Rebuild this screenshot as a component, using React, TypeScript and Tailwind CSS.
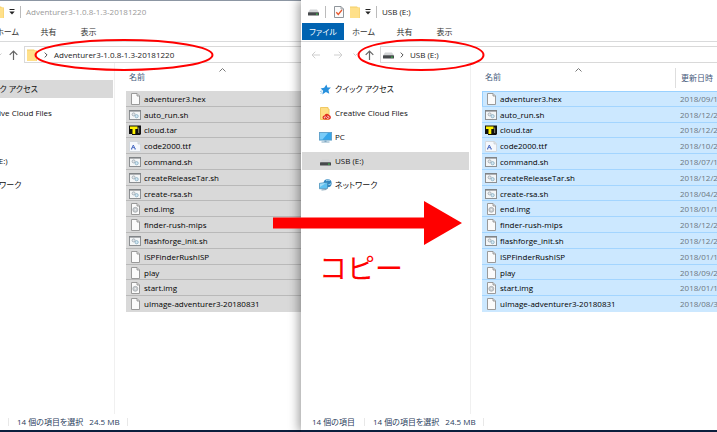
import type { ReactNode } from "react";

type Kind = "doc" | "script" | "tar" | "font" | "image";
type FileRow = { name: string; kind: Kind; date: string };

const FILES: FileRow[] = [
  { name: "adventurer3.hex", kind: "doc", date: "2018/09/1" },
  { name: "auto_run.sh", kind: "script", date: "2018/12/2" },
  { name: "cloud.tar", kind: "tar", date: "2018/12/2" },
  { name: "code2000.ttf", kind: "font", date: "2018/10/2" },
  { name: "command.sh", kind: "script", date: "2018/07/1" },
  { name: "createReleaseTar.sh", kind: "script", date: "2018/12/2" },
  { name: "create-rsa.sh", kind: "script", date: "2018/04/2" },
  { name: "end.img", kind: "image", date: "2018/01/1" },
  { name: "finder-rush-mips", kind: "doc", date: "2018/12/2" },
  { name: "flashforge_init.sh", kind: "script", date: "2018/12/2" },
  { name: "ISPFinderRushISP", kind: "doc", date: "2018/01/1" },
  { name: "play", kind: "doc", date: "2018/09/2" },
  { name: "start.img", kind: "image", date: "2018/01/1" },
  { name: "uImage-adventurer3-20180831", kind: "doc", date: "2018/08/3" },
];

function FileIcon({ kind }: { kind: Kind }) {
  if (kind === "script")
    return (
      <svg width="12" height="10" viewBox="0 0 12 10">
        <rect x="0.5" y="0.5" width="11" height="9" fill="#f4f6f7" stroke="#8c8f92" />
        <path d="M0 0.8h12" stroke="#808487" strokeWidth="1.6" />
        <circle cx="4.6" cy="4.4" r="1.5" fill="#e3e7ea" stroke="#a3adb4" strokeWidth="0.9" />
        <circle cx="7.6" cy="6.2" r="1.6" fill="#d3e8f3" stroke="#8fb2c6" strokeWidth="0.9" />
      </svg>
    );
  if (kind === "tar")
    return (
      <svg width="12" height="10" viewBox="0 0 12 10">
        <path d="M0 0.5h12V9l-1 1H3V9H0z" fill="#111" />
        <path d="M9.700 2.500v5.500" stroke="#8f8f70" strokeWidth="1" />
        <path d="M1 1.5h7.500v2.500H6.300V9H3.500V4H1z" fill="#fff200" />
      </svg>
    );
  if (kind === "font")
    return (
      <svg width="12" height="11" viewBox="0 0 12 11">
        <path d="M0.5 0.5h9l2 2v8h-11z" fill="#f5f8fc" stroke="#d3d8dd" />
        <path d="M9 0.5v2.5h2.5" fill="#dde3e8" stroke="#c3c8cd" strokeWidth="0.7" />
        <path d="M2.500 8L4.300 4L6.200 8M3.200 6.600h2.200M2 8h1.200M5.500 8h1.300" fill="none" stroke="#3f63c0" strokeWidth="0.900" />
      </svg>
    );
  return (
    <svg width="9" height="12" viewBox="0 0 9 12">
      <path d="M0.5 0.5h5.500l2.500 2.500v8.500h-8z" fill="#fbfbfb" stroke="#9a9a9a" />
      <path d="M6 0.500v2.500h2.500" fill="#ddd" stroke="#8c8c8c" strokeWidth="0.8" />
      {kind === "image" && (
        <>
          <circle cx="4.300" cy="6.800" r="2.500" fill="#c9cdd0" stroke="#9fa5a9" strokeWidth="0.700" />
          <circle cx="4.300" cy="6.800" r="0.700" fill="#f7f7f7" />
        </>
      )}
    </svg>
  );
}

function DriveIcon() {
  return (
    <svg width="11" height="11" viewBox="0 0 11 11">
      <path d="M2 3.500h7l2 3H0z" fill="#d2d4d6" />
      <rect x="0" y="6.200" width="11" height="3.300" rx="0.600" fill="#46494c" />
      <rect x="8" y="7.600" width="1.800" height="1" fill="#38d04a" />
    </svg>
  );
}

function FolderIcon() {
  return (
    <svg width="10" height="12" viewBox="0 0 10 12">
      <path d="M0 0.500h7l1 1h2V12H0z" fill="#f3cf66" />
      <path d="M0 1.500h8.500l1 1V12H0z" fill="#ffe08a" />
    </svg>
  );
}

function StarIcon() {
  return (
    <svg width="11" height="11" viewBox="0 0 11 11">
      <path d="M6.400 0.400L7.400 3.400L10.900 3.600L8.400 6L9.300 9.800L5.900 8L2.300 10.400L3.200 6.700L0.600 4.500L4.200 3.700z" fill="#2790dd" />
      <path d="M0 7.500l2.300-.6M0.500 9.500l1.800-1" stroke="#7fc0ee" strokeWidth="0.800" />
    </svg>
  );
}

function CreativeIcon() {
  return (
    <svg width="11" height="13" viewBox="0 0 11 13">
      <path d="M0.500 0.500h7.500v1.500h1v10.500h-8.500z" fill="#ffdf85" stroke="#f0c965" />
      <path d="M4.500 12.500a2 2 0 0 1 0-4a2.500 2.500 0 0 1 4.500-.5a2.300 2.300 0 0 1 .2 4.500z" fill="#e0301e" />
      <path d="M5 11.400a.9.9 0 1 1 .9-1.400l1 1.200a1.200 1.200 0 1 0 .2-1.900" fill="none" stroke="#fff" strokeWidth="0.700" />
    </svg>
  );
}

function PcIcon() {
  return (
    <svg width="13" height="11" viewBox="0 0 13 11">
      <rect x="0.400" y="0.400" width="12.200" height="7.700" fill="#36a6ea" stroke="#5c9cc4" strokeWidth="0.800" />
      <path d="M1 1h8L3.500 7.500H1z" fill="#7accf8" />
      <path d="M5.500 8.400h2v1h3v1.200h-8v-1.200h3z" fill="#7fa8c2" />
    </svg>
  );
}

function NetworkIcon() {
  return (
    <svg width="13" height="12" viewBox="0 0 13 12">
      <circle cx="8.600" cy="4.300" r="4" fill="#3387bf" />
      <path d="M7 1.800q2-1.300 3.800-.2M9.500 5.500q1.600.2 2.600-1" stroke="#a6d8ef" fill="none" />
      <path d="M0.500 4.300l8-1v6.200l-8 .3z" fill="#5fc1f0" stroke="#4389b3" strokeWidth="0.700" />
      <path d="M1 4.700l6-.7L1 8z" fill="#a2dcf7" />
      <path d="M2.500 11l5-.5" stroke="#7f9fb3" strokeWidth="1.200" />
    </svg>
  );
}

function CheckDocIcon() {
  return (
    <svg width="10" height="12" viewBox="0 0 10 12">
      <path d="M0.500 0.500h6.500l2.500 2.500v8.500h-9z" fill="#fbfbfb" stroke="#8f959b" />
      <path d="M7 0.500v2.500h2.500" fill="none" stroke="#8f959b" strokeWidth="0.800" />
      <path d="M2.300 6.200l2 2.300l3.600-4.500" fill="none" stroke="#e8562a" strokeWidth="1.300" />
    </svg>
  );
}

const NAV = [
  { label: "クイック アクセス", icon: <StarIcon /> },
  { label: "Creative Cloud Files", icon: <CreativeIcon /> },
  { label: "PC", icon: <PcIcon /> },
  { label: "USB (E:)", icon: <DriveIcon /> },
  { label: "ネットワーク", icon: <NetworkIcon /> },
];

type ExplorerProps = {
  title: string;
  addressIcon: ReactNode;
  current: string;
  active: boolean;
};

function Explorer({ title, addressIcon, current, active }: ExplorerProps) {
  return (
    <div className="flex min-h-screen flex-col bg-white">
      <header className="flex h-[23px] items-center pl-[7px]">
        <span className="flex w-[17px]"><DriveIcon /></span>
        <span className="h-3 w-px bg-[#bbb]" />
        <button aria-label="プロパティ" className="ml-2 w-[16px]"><CheckDocIcon /></button>
        <button aria-label="新しいフォルダー" className="w-[15px]"><FolderIcon /></button>
        <button aria-label="カスタマイズ" className="w-[11px]">
          <svg width="6" height="6" viewBox="0 0 6 6">
            <path d="M0.500 0.500h5" stroke="#222" />
            <path d="M0.300 2.500h5.400L3 5.500z" fill="#222" />
          </svg>
        </button>
        <span className="h-3 w-px bg-[#bbb]" />
        <h1 className={active ? "pl-[5px] text-[#222]" : "pl-[5px] text-[#999]"}>{title}</h1>
      </header>

      <div className="flex h-[19px] items-start border-b border-[#d9dadb] pl-px text-[#333]">
        <button className="h-[17px] w-[42px] bg-[#0063b1] text-white">ファイル</button>
        <button className="h-[17px] w-[39px]">ホーム</button>
        <button className="h-[17px] w-[43px]">共有</button>
        <button className="h-[17px] w-[37px]">表示</button>
      </div>

      <div className="flex h-[21px] items-end">
        <div className="flex h-[17px] w-[79px] items-center pl-[10px]">
          <button aria-label="戻る" className="w-[23px]">
            <svg width="9" height="8" viewBox="0 0 9 8"><path d="M9 4H1M4.300 0.700L1 4l3.300 3.300" fill="none" stroke="#cfcfcf" /></svg>
          </button>
          <button aria-label="進む" className="w-[19px]">
            <svg width="9" height="8" viewBox="0 0 9 8"><path d="M0 4h8M4.700 0.700L8 4L4.700 7.300" fill="none" stroke="#cfcfcf" /></svg>
          </button>
          <button aria-label="履歴" className="w-[12px]">
            <svg width="5" height="4" viewBox="0 0 5 4"><path d="M0.500 0.500l2 2l2-2" fill="none" stroke="#cfcfcf" /></svg>
          </button>
          <button aria-label="上へ">
            <svg width="9" height="10" viewBox="0 0 9 10"><path d="M4.500 10V1M0.700 4.800L4.500 1l3.800 3.800" fill="none" stroke="#666" strokeWidth="1.200" /></svg>
          </button>
        </div>
        <div className="flex h-[17px] flex-1 items-center border-y border-l border-[#d9d9d9] pl-[2px] text-[#222]">
          <span className="flex w-[17px]">{addressIcon}</span>
          <svg className="mr-[6px]" width="4" height="6" viewBox="0 0 4 6"><path d="M0.700 0.600l2.400 2.400l-2.400 2.400" fill="none" stroke="#555" /></svg>
          <span>{title}</span>
        </div>
      </div>

      <div className="flex flex-1">
        <nav className="flex w-[169px] shrink-0 flex-col gap-[6px] px-px pt-[17px] text-[#111]">
          {NAV.map((item) => (
            <button
              key={item.label}
              className={
                item.label === current
                  ? "flex h-[18px] items-center bg-[#d9d9d9] pl-[17px]"
                  : "flex h-[18px] items-center pl-[17px]"
              }
            >
              <span className="flex w-[16px] shrink-0 justify-center pr-[3px]">{item.icon}</span>
              {item.label}
            </button>
          ))}
        </nav>
        <main className="min-w-0 flex-1 overflow-hidden border-l border-[#f0f0f0] pl-[11px]">
          <table className="block">
            <thead className="block">
              <tr className="grid h-[28px] grid-cols-[193px_1fr] text-left text-[#43597a]">
                <th className="relative flex items-center pl-[3px] font-normal">
                  名前
                  <svg className="absolute left-[93px] top-[5px]" width="7" height="4" viewBox="0 0 7 4"><path d="M0.500 3.500l3-3l3 3" fill="none" stroke="#777" /></svg>
                </th>
                {active && (
                  <th className="mt-[5px] flex h-[20px] items-center whitespace-nowrap border-l border-[#dedede] pl-[5px] font-normal">更新日時</th>
                )}
              </tr>
            </thead>
            <tbody className="grid h-[221px] grid-rows-14">
              {FILES.map((file) => (
                <tr
                  key={file.name}
                  className={
                    active
                      ? "grid grid-cols-[193px_1fr] border-b border-[#a3d5ff] bg-[#cce8ff] first:shadow-[inset_1px_1px_0_#99d1ff] last:border-[#cce8ff]"
                      : "grid grid-cols-[193px_1fr] border-b border-[#b9b9b9] bg-[#d9d9d9] last:border-[#d9d9d9]"
                  }
                >
                  <td className="flex min-h-0 items-center pt-px text-black">
                    <span className="flex w-[18px] shrink-0 justify-center"><FileIcon kind={file.kind} /></span>
                    {file.name}
                  </td>
                  {active && (
                    <td className="flex min-h-0 items-center whitespace-nowrap pl-[5px] pt-px text-[#6d7780]">{file.date}</td>
                  )}
                </tr>
              ))}
            </tbody>
          </table>
        </main>
      </div>

      <footer className="flex h-[18px] items-center border-b-2 border-[#0b1f3d] pl-[11px] text-[#2b3d5c]">
        <span className="w-[52px]">14 個の項目</span>
        <span className="h-2 w-px bg-[#e8e8e8]" />
        <span className="pl-[8px]">14 個の項目を選択</span>
        <span className="w-[44px] pl-[6px]">24.5 MB</span>
        <span className="h-2 w-px bg-[#e8e8e8]" />
      </footer>
    </div>
  );
}

export default function App() {
  return (
    <div className="relative flex min-h-screen overflow-hidden whitespace-nowrap font-['Open_Sans','Noto_Sans_CJK_JP',sans-serif] text-[8px] leading-[12px] [font-feature-settings:'palt']">
      <section className="w-[301px] shrink-0 overflow-hidden border-t border-[#8c96a3]">
        <div className="-mt-px -ml-[55px]">
          <Explorer title="Adventurer3-1.0.8-1.3-20181220" addressIcon={<FolderIcon />} current="クイック アクセス" active={false} />
        </div>
      </section>
      <section className="relative min-w-0 flex-1 shadow-[-2px_0_10px_rgba(0,0,0,0.4)]">
        <Explorer title="USB (E:)" addressIcon={<DriveIcon />} current="USB (E:)" active />
      </section>

      <svg className="pointer-events-none absolute left-0 top-0" width="717" height="432" viewBox="0 0 717 432">
        <ellipse cx="124" cy="55" rx="88.500" ry="15" fill="none" stroke="#f00" strokeWidth="2" />
        <ellipse cx="421" cy="55" rx="62.500" ry="15" fill="none" stroke="#f00" strokeWidth="2" />
        <path d="M273 217.500H424V201L462 223L424 245V228.500H273z" fill="#f00" />
      </svg>
      <p className="absolute left-[319px] top-[252px] text-[28px] leading-[32px] text-[#f00] [font-feature-settings:normal]">コピー</p>
    </div>
  );
}
